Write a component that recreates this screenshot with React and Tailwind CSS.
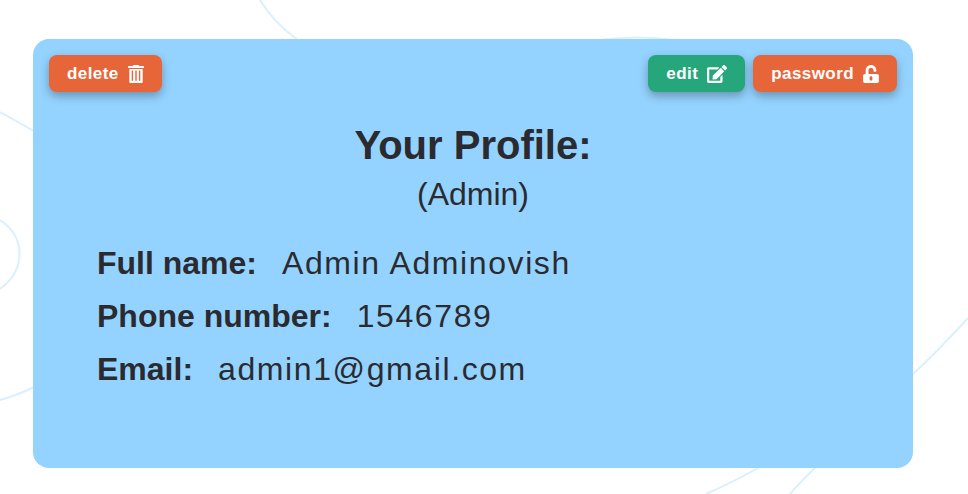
import { FaEdit, FaUnlockAlt } from "react-icons/fa";

function TrashIcon() {
  return (
    <svg width="16" height="18" viewBox="0 0 16 18" fill="currentColor" aria-hidden="true">
      <path d="M5.4 0h5.2l.6 1H15.4a.6.6 0 0 1 .6.6V3H0V1.600a.6.6 0 0 1 .6-.6H4.800z" />
      <path
        fillRule="evenodd"
        d="M1.300 4h13.400v13a1 1 0 0 1-1 1H2.300a1 1 0 0 1-1-1zM3.700 5.500v10.200h1.400V5.500zM7.300 5.500v10.200h1.400V5.500zM10.900 5.500v10.200h1.400V5.500z"
      />
    </svg>
  );
}

function ActionButton({ label, color, children }) {
  return (
    <button
      type="button"
      className={`flex h-[37px] items-center gap-[9px] rounded-lg px-[18px] text-[17px] font-bold tracking-wide text-white shadow-[0_4px_10px_rgba(0,0,0,0.3)] ${color}`}
    >
      <span>{label}</span>
      {children}
    </button>
  );
}

function Field({ label, value }) {
  return (
    <div className="flex gap-[25px]">
      <dt className="font-bold">{label}</dt>
      <dd className="tracking-wider">{value}</dd>
    </div>
  );
}

export default function App() {
  return (
    <div className="relative min-h-screen overflow-hidden bg-white pt-[39px] pr-[55px] pb-[26px] pl-[33px] font-['Liberation_Sans',Arial,sans-serif] text-[#2b2b2f]">
      <svg
        className="absolute top-0 left-0"
        width="968"
        height="494"
        fill="none"
        stroke="#daf0ff"
        strokeWidth="2"
        aria-hidden="true"
      >
        <path d="M260 0Q274 23 298 40" />
        <path d="M600 40Q637 35 675 40" />
        <path d="M0 112L34 131" />
        <path d="M0 220C26 237 26 270 0 289" />
        <path d="M0 400Q18 395 34 387" />
        <path d="M912 375Q940 349 968 318" />
        <path d="M706 494Q735 481 760 467" />
        <path d="M790 494Q801 481 816 467" />
      </svg>
      <main className="relative rounded-2xl bg-[#94d3ff] px-4 pt-4 pb-[75px]">
        <div className="flex justify-between">
          <ActionButton label="delete" color="bg-[#e66539]">
            <TrashIcon />
          </ActionButton>
          <div className="flex gap-2">
            <ActionButton label="edit" color="bg-[#26a77b]">
              <FaEdit size={20} />
            </ActionButton>
            <ActionButton label="password" color="bg-[#e66539]">
              <FaUnlockAlt className="h-[18px] w-4" />
            </ActionButton>
          </div>
        </div>
        <header className="mt-[30px] text-center">
          <h1 className="text-[40px] leading-[46px] font-bold">Your Profile:</h1>
          <p className="text-[32px] leading-[52px]">(Admin)</p>
        </header>
        <dl className="mt-[19px] flex flex-col gap-[5px] px-12 text-[32px] leading-12">
          <Field label="Full name:" value="Admin Adminovish" />
          <Field label="Phone number:" value="1546789" />
          <Field label="Email:" value="admin1@gmail.com" />
        </dl>
      </main>
    </div>
  );
}
